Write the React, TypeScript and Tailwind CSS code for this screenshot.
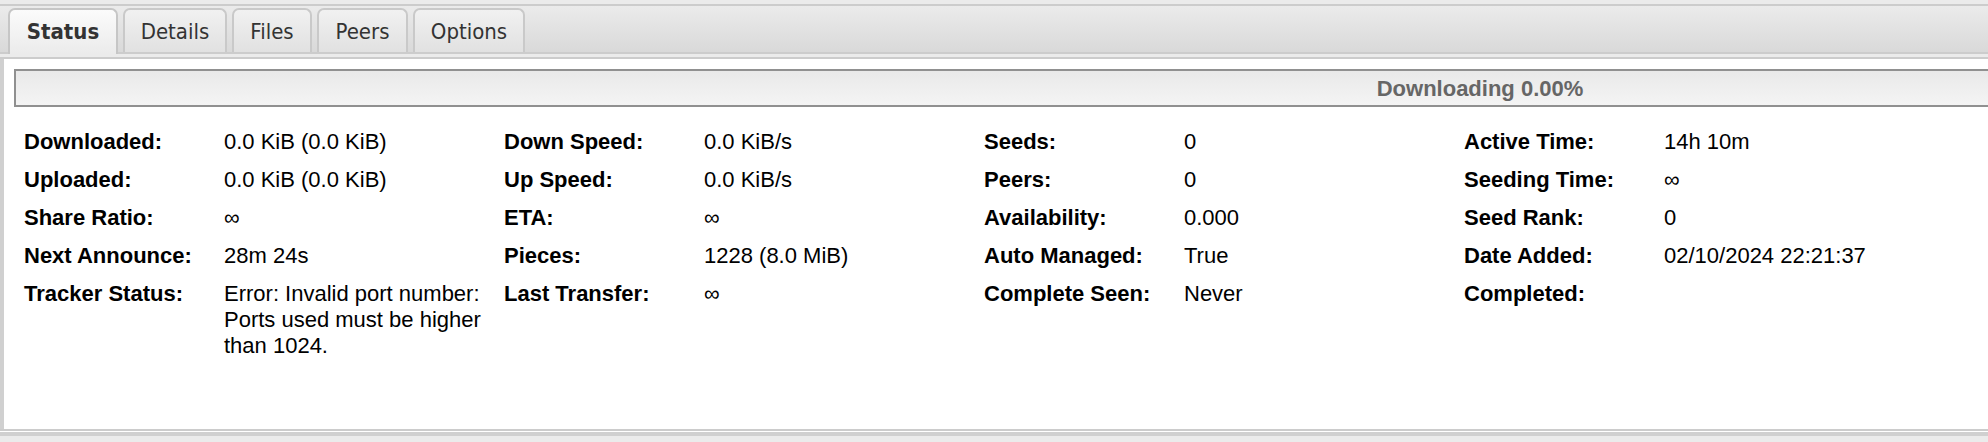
import React from "react"

type Tab = { name: string; width: string; active?: boolean }

const TABS: Tab[] = [
  { name: "Status", width: "w-[110px]", active: true },
  { name: "Details", width: "w-[104px]" },
  { name: "Files", width: "w-[80px]" },
  { name: "Peers", width: "w-[91px]" },
  { name: "Options", width: "w-[112px]" },
]

// each row: label/value pairs for the four columns
const ROWS: [string, string][][] = [
  [
    ["Downloaded:", "0.0 KiB (0.0 KiB)"],
    ["Down Speed:", "0.0 KiB/s"],
    ["Seeds:", "0"],
    ["Active Time:", "14h 10m"],
  ],
  [
    ["Uploaded:", "0.0 KiB (0.0 KiB)"],
    ["Up Speed:", "0.0 KiB/s"],
    ["Peers:", "0"],
    ["Seeding Time:", "∞"],
  ],
  [
    ["Share Ratio:", "∞"],
    ["ETA:", "∞"],
    ["Availability:", "0.000"],
    ["Seed Rank:", "0"],
  ],
  [
    ["Next Announce:", "28m 24s"],
    ["Pieces:", "1228 (8.0 MiB)"],
    ["Auto Managed:", "True"],
    ["Date Added:", "02/10/2024 22:21:37"],
  ],
  [
    ["Tracker Status:", "Error: Invalid port number: Ports used must be higher than 1024."],
    ["Last Transfer:", "∞"],
    ["Complete Seen:", "Never"],
    ["Completed:", ""],
  ],
]

function TabButton({ tab }: { tab: Tab }) {
  if (tab.active) {
    return (
      <div
        className={`${tab.width} relative z-10 -mb-[2px] h-[46px] rounded-t-[7px] border-2 border-b-0 border-[#c6c6c6] bg-gradient-to-b from-[#fbfbfb] to-[#ebebeb] flex items-center justify-center pb-[2px] text-[22px] font-bold text-[#333] font-['DejaVu_Sans_Condensed','DejaVu_Sans',sans-serif]`}
      >
        {tab.name}
      </div>
    )
  }
  return (
    <div
      className={`${tab.width} h-[44px] rounded-t-[7px] border-2 border-b-0 border-[#c9c9c9] bg-gradient-to-b from-[#f1f1f1] to-[#e1e1e1] flex items-center justify-center text-[22px] text-[#333] font-['DejaVu_Sans_Condensed','DejaVu_Sans',sans-serif]`}
    >
      {tab.name}
    </div>
  )
}

export default function App() {
  return (
    <div className="w-[1988px] h-[442px] overflow-hidden bg-[#ebebeb] font-['Liberation_Sans',Arial,sans-serif]">
      <div className="h-[4px]" />
      {/* tab strip */}
      <div className="h-[50px] border-y-2 border-[#cccccc] bg-gradient-to-b from-[#ebebeb] to-[#d9d9d9] flex items-end gap-[5px] pl-[8px]">
        {TABS.map((t) => (
          <TabButton key={t.name} tab={t} />
        ))}
      </div>
      <div className="h-[5px] bg-[#ebebeb] border-b-2 border-[#cccccc]" />

      {/* status panel */}
      <div className="h-[370px] border-l-4 border-[#d0d0d0] bg-white pt-[10px] pl-[10px]">
        <div className="w-[2932px] h-[38px] border-2 border-[#909090] bg-gradient-to-b from-[#e9e9e9] to-[#f4f4f4] flex items-center justify-center text-[22px] font-bold text-[#666]">
          Downloading 0.00%
        </div>

        <div className="mt-[16px] ml-[10px] grid grid-cols-[200px_280px_200px_280px_200px_280px_200px_280px] text-[22px] leading-[26px] text-black">
          {ROWS.map((row, i) =>
            row.map(([label, value], j) => (
              <React.Fragment key={`${i}-${j}`}>
                <div className="py-[6px] font-bold">{label}</div>
                <div className="py-[6px] pr-[10px]">{value}</div>
              </React.Fragment>
            ))
          )}
        </div>
      </div>

      <div className="h-[2px] bg-[#cccccc]" />
      <div className="h-[1px] bg-white" />
      <div className="h-[4px] bg-[#d0d0d0]" />
    </div>
  )
}
